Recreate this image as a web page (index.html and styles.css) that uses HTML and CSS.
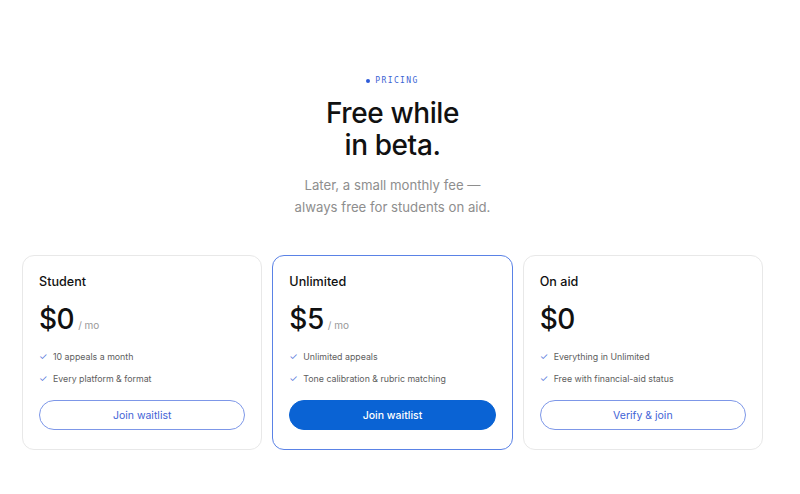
FILE: index.html
```html
<!DOCTYPE html>
<html lang="en">
<head>
    <meta charset="UTF-8">
    <meta name="viewport" content="width=device-width, initial-scale=1.0">
    <title>Pricing</title>
    <link rel="stylesheet" href="styles.css">
</head>
<body>
    <section class="pricing">
        <div class="eyebrow"><span class="dot"></span>PRICING</div>
        <h1>Free while<br>in beta.</h1>
        <p class="lede">Later, a small monthly fee —<br>always free for students on aid.</p>

        <div class="plans">
            <div class="plan">
                <div class="plan-name">Student</div>
                <div class="price">$0<span class="per">/ mo</span></div>
                <ul class="features">
                    <li>10 appeals a month</li>
                    <li>Every platform &amp; format</li>
                </ul>
                <button class="btn">Join waitlist</button>
            </div>
            <div class="plan featured">
                <div class="plan-name">Unlimited</div>
                <div class="price">$5<span class="per">/ mo</span></div>
                <ul class="features">
                    <li>Unlimited appeals</li>
                    <li>Tone calibration &amp; rubric matching</li>
                </ul>
                <button class="btn btn-primary">Join waitlist</button>
            </div>
            <div class="plan">
                <div class="plan-name">On aid</div>
                <div class="price">$0</div>
                <ul class="features">
                    <li>Everything in Unlimited</li>
                    <li>Free with financial-aid status</li>
                </ul>
                <button class="btn">Verify &amp; join</button>
            </div>
        </div>
    </section>
</body>
</html>
```

FILE: styles.css
```css
body {
    margin: 0;
    background-color: #fff;
    color: #111;
    font-family: Inter, "Noto Sans", sans-serif;
}

.pricing {
    width: 741px;
    margin-left: 22px;
    padding-top: 76px;
    text-align: center;
}

.eyebrow {
    display: flex;
    justify-content: center;
    align-items: center;
    gap: 5px;
    font-family: "DejaVu Sans Mono", "Liberation Mono", monospace;
    font-size: 8px;
    letter-spacing: 1.4px;
    color: #3b63d4;
    line-height: 10px;
}

.dot {
    width: 4px;
    height: 4px;
    border-radius: 50%;
    background-color: #2d5bd8;
}

h1 {
    margin: 11px 0 0;
    font-size: 28px;
    font-weight: 500;
    line-height: 32px;
    letter-spacing: -0.4px;
}

.lede {
    margin: 13px 0 0;
    font-size: 13.2px;
    line-height: 22px;
    color: #8e8e8e;
}

.plans {
    display: grid;
    grid-template-columns: repeat(3, 1fr);
    gap: 10px;
    margin-top: 37px;
    text-align: left;
}

.plan {
    border: 1px solid #e8e8e8;
    border-radius: 12px;
    padding: 17px 16px 19px;
}

.plan.featured {
    border-color: #5a82e6;
}

.plan-name {
    font-size: 12.6px;
    font-weight: 500;
    line-height: 18px;
}

.price {
    margin-top: 11px;
    font-size: 28px;
    line-height: 34px;
    font-weight: 500;
    letter-spacing: -0.5px;
}

.per {
    margin-left: 4px;
    font-size: 10px;
    line-height: 1;
    font-weight: 400;
    color: #999;
    letter-spacing: 0;
}

.features {
    list-style: none;
    margin: 10px 0 0;
    padding: 0;
}

.features li {
    font-size: 8.8px;
    line-height: 22px;
    color: #5e5e5e;
}

.features li::before {
    content: "✓";
    display: inline-block;
    width: 14px;
    line-height: 22px;
    color: #5577dc;
    font-size: 9.5px;
}

.btn {
    display: block;
    width: 100%;
    height: 30px;
    margin-top: 10px;
    border: 1px solid #7d97e8;
    border-radius: 15px;
    background-color: #fff;
    color: #3f63d6;
    font-family: Inter, sans-serif;
    font-size: 10.5px;
    cursor: pointer;
}

.btn-primary {
    background-color: #0a63d4;
    border-color: #0a63d4;
    color: #fff;
    font-weight: 500;
}
```
